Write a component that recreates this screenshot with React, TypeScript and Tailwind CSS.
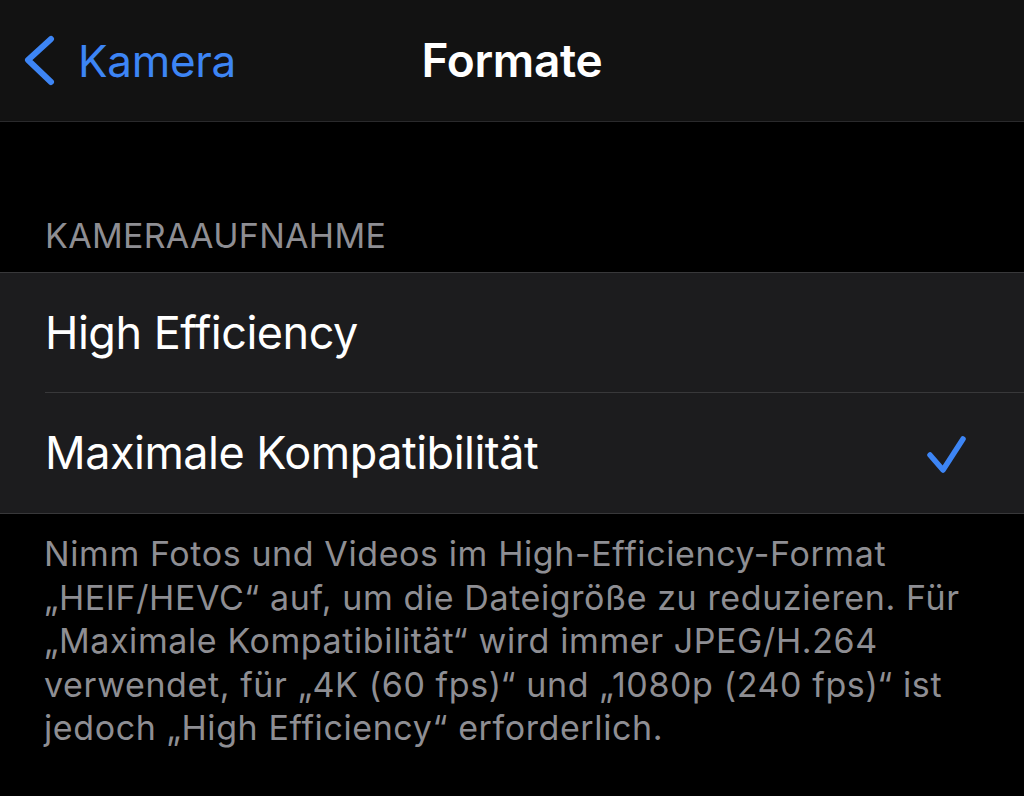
import React from 'react';

const font = { fontFamily: 'Inter, "Noto Sans", sans-serif' };

function Row({ label, checked, last }: { label: string; checked?: boolean; last?: boolean }) {
  return (
    <div className="pl-[45px] bg-[#1c1c1e]">
      <div className={`h-[120px] flex items-center justify-between pr-[52px] ${last ? '' : 'border-b border-[#38383a]'}`}>
        <span className="text-[45px] text-white tracking-[-0.5px]">{label}</span>
        {checked && (
          <svg width="48" height="48" viewBox="0 0 48 48" fill="none">
            <path d="M6 26 L19 41 L39 10" stroke="#3d85f5" strokeWidth="5.5" strokeLinecap="round" strokeLinejoin="round" />
          </svg>
        )}
      </div>
    </div>
  );
}

export default function App() {
  return (
    <div className="w-[1024px] h-[796px] bg-black overflow-hidden" style={font}>
      <div className="h-[122px] bg-[#121212] border-b border-[#2a2a2c] relative flex items-center justify-center">
        <div className="absolute left-[22px] top-0 h-full flex items-center gap-[22px]">
          <svg width="34" height="52" viewBox="0 0 34 52" fill="none">
            <path d="M29 4 L6 25 L29 47" stroke="#3d85f5" strokeWidth="6" strokeLinecap="round" strokeLinejoin="round" />
          </svg>
          <span className="text-[44px] text-[#3d85f5] tracking-[-0.3px]">Kamera</span>
        </div>
        <span className="text-[46px] font-semibold text-white tracking-[-0.3px]">Formate</span>
      </div>

      <div className="pt-[94px] pb-[16px] pl-[45px] text-[34px] text-[#8e8e93] leading-[40px] tracking-[0.3px]">KAMERAAUFNAHME</div>

      <div className="border-t border-b border-[#38383a]">
        <Row label="High Efficiency" />
        <Row label="Maximale Kompatibilität" checked last />
      </div>

      <div className="pl-[44px] pt-[18px] text-[34px] leading-[43.5px] text-[#8e8e93] tracking-[0.6px]">
        <div>Nimm Fotos und Videos im High-Efficiency-Format</div>
        <div>„HEIF/HEVC“ auf, um die Dateigröße zu reduzieren. Für</div>
        <div>„Maximale Kompatibilität“ wird immer JPEG/H.264</div>
        <div>verwendet, für „4K (60 fps)“ und „1080p (240 fps)“ ist</div>
        <div>jedoch „High Efficiency“ erforderlich.</div>
      </div>
    </div>
  );
}
